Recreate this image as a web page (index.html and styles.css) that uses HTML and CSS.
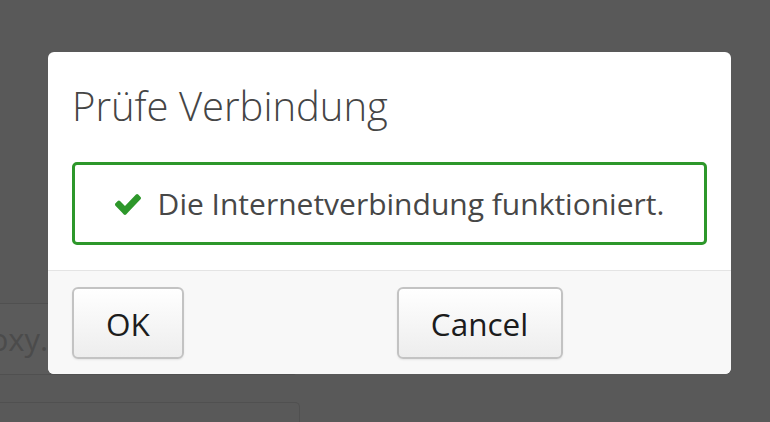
FILE: index.html
```html
<!DOCTYPE html>
<html>
	<head>
		<meta charset="utf-8">
		<title>Prüfe Verbindung</title>
		<link rel="stylesheet" href="styles.css">
	</head>
	<body>
		<div class="page">
			<div class="field field-proxy">proxy.c</div>
			<div class="field field-port"></div>
		</div>

		<div class="dialog">
			<div class="dialog-head">
				<h4>Prüfe Verbindung</h4>
			</div>
			<div class="dialog-body">
				<div class="status status-ok">
					<svg class="check" viewBox="121 334 1550 1188" preserveAspectRatio="none">
						<path d="M1671 566q0 40-28 68l-724 724-136 136q-28 28-68 28t-68-28l-136-136-362-362q-28-28-28-68t28-68l136-136q28-28 68-28t68 28l294 295 656-657q28-28 68-28t68 28l136 136q28 28 28 68z"/>
					</svg>
					<span>Die Internetverbindung funktioniert.</span>
				</div>
			</div>
			<div class="dialog-foot">
				<button type="button" class="btn btn-ok">OK</button>
				<button type="button" class="btn btn-cancel">Cancel</button>
			</div>
		</div>
	</body>
</html>
```

FILE: styles.css
```css
* {
	box-sizing: border-box;
}

html, body {
	margin: 0;
	height: 100%;
}

body {
	background-color: #595959;
	font-family: "Open Sans", "DejaVu Sans", sans-serif;
	overflow: hidden;
}

/* page behind the overlay */
.page {
	padding-top: 303px;
	display: flex;
	flex-direction: column;
	gap: 27px;
}

.field {
	border: 1px solid #505050;
	border-radius: 5px;
	margin-left: -200px;
	color: #4b4b4b;
	font-size: 31px;
	white-space: nowrap;
	overflow: hidden;
}

.field-proxy {
	width: 498px;
	height: 72px;
	line-height: 70px;
	padding-left: 157px;
	background-color: #5b5b5b;
}

.field-port {
	width: 500px;
	height: 20px;
	border-bottom: none;
	border-radius: 5px 5px 0 0;
}

/* dialog */
.dialog {
	position: absolute;
	left: 48px;
	top: 52px;
	width: 683px;
	background-color: #fff;
	border-radius: 6px;
	overflow: hidden;
}

.dialog-head {
	padding: 30px 24px 0 24px;
}

.dialog-head h4 {
	margin: 0;
	font-size: 40px;
	font-weight: 300;
	line-height: 48px;
	color: #454545;
}

.dialog-body {
	padding: 32px 24px 25px 24px;
}

.status {
	display: flex;
	justify-content: center;
	align-items: center;
	gap: 17px;
	border: 3px solid #2d972a;
	border-radius: 5px;
	padding: 18px 16px;
	font-size: 30px;
	line-height: 41px;
	color: #474747;
}

.check {
	width: 26px;
	height: 21px;
	fill: #2d972a;
	margin-top: 2px;
}

.dialog-foot {
	display: grid;
	grid-template-columns: 1fr 1fr;
	gap: 14px;
	padding: 16px 24px 15px 24px;
	border-top: 1px solid #e4e4e4;
	background-color: #f8f8f8;
}

.btn {
	height: 72px;
	padding: 0;
	font-family: "Open Sans", "DejaVu Sans", sans-serif;
	font-size: 31.5px;
	color: #1c1c1c;
	background: linear-gradient(#ffffff, #ededed);
	border: 2px solid #c3c3c3;
	border-radius: 6px;
	box-shadow: 0 1px 2px rgba(0, 0, 0, 0.08);
	justify-self: start;
}

.btn-ok {
	width: 112px;
}

.btn-cancel {
	width: 166px;
}
```
